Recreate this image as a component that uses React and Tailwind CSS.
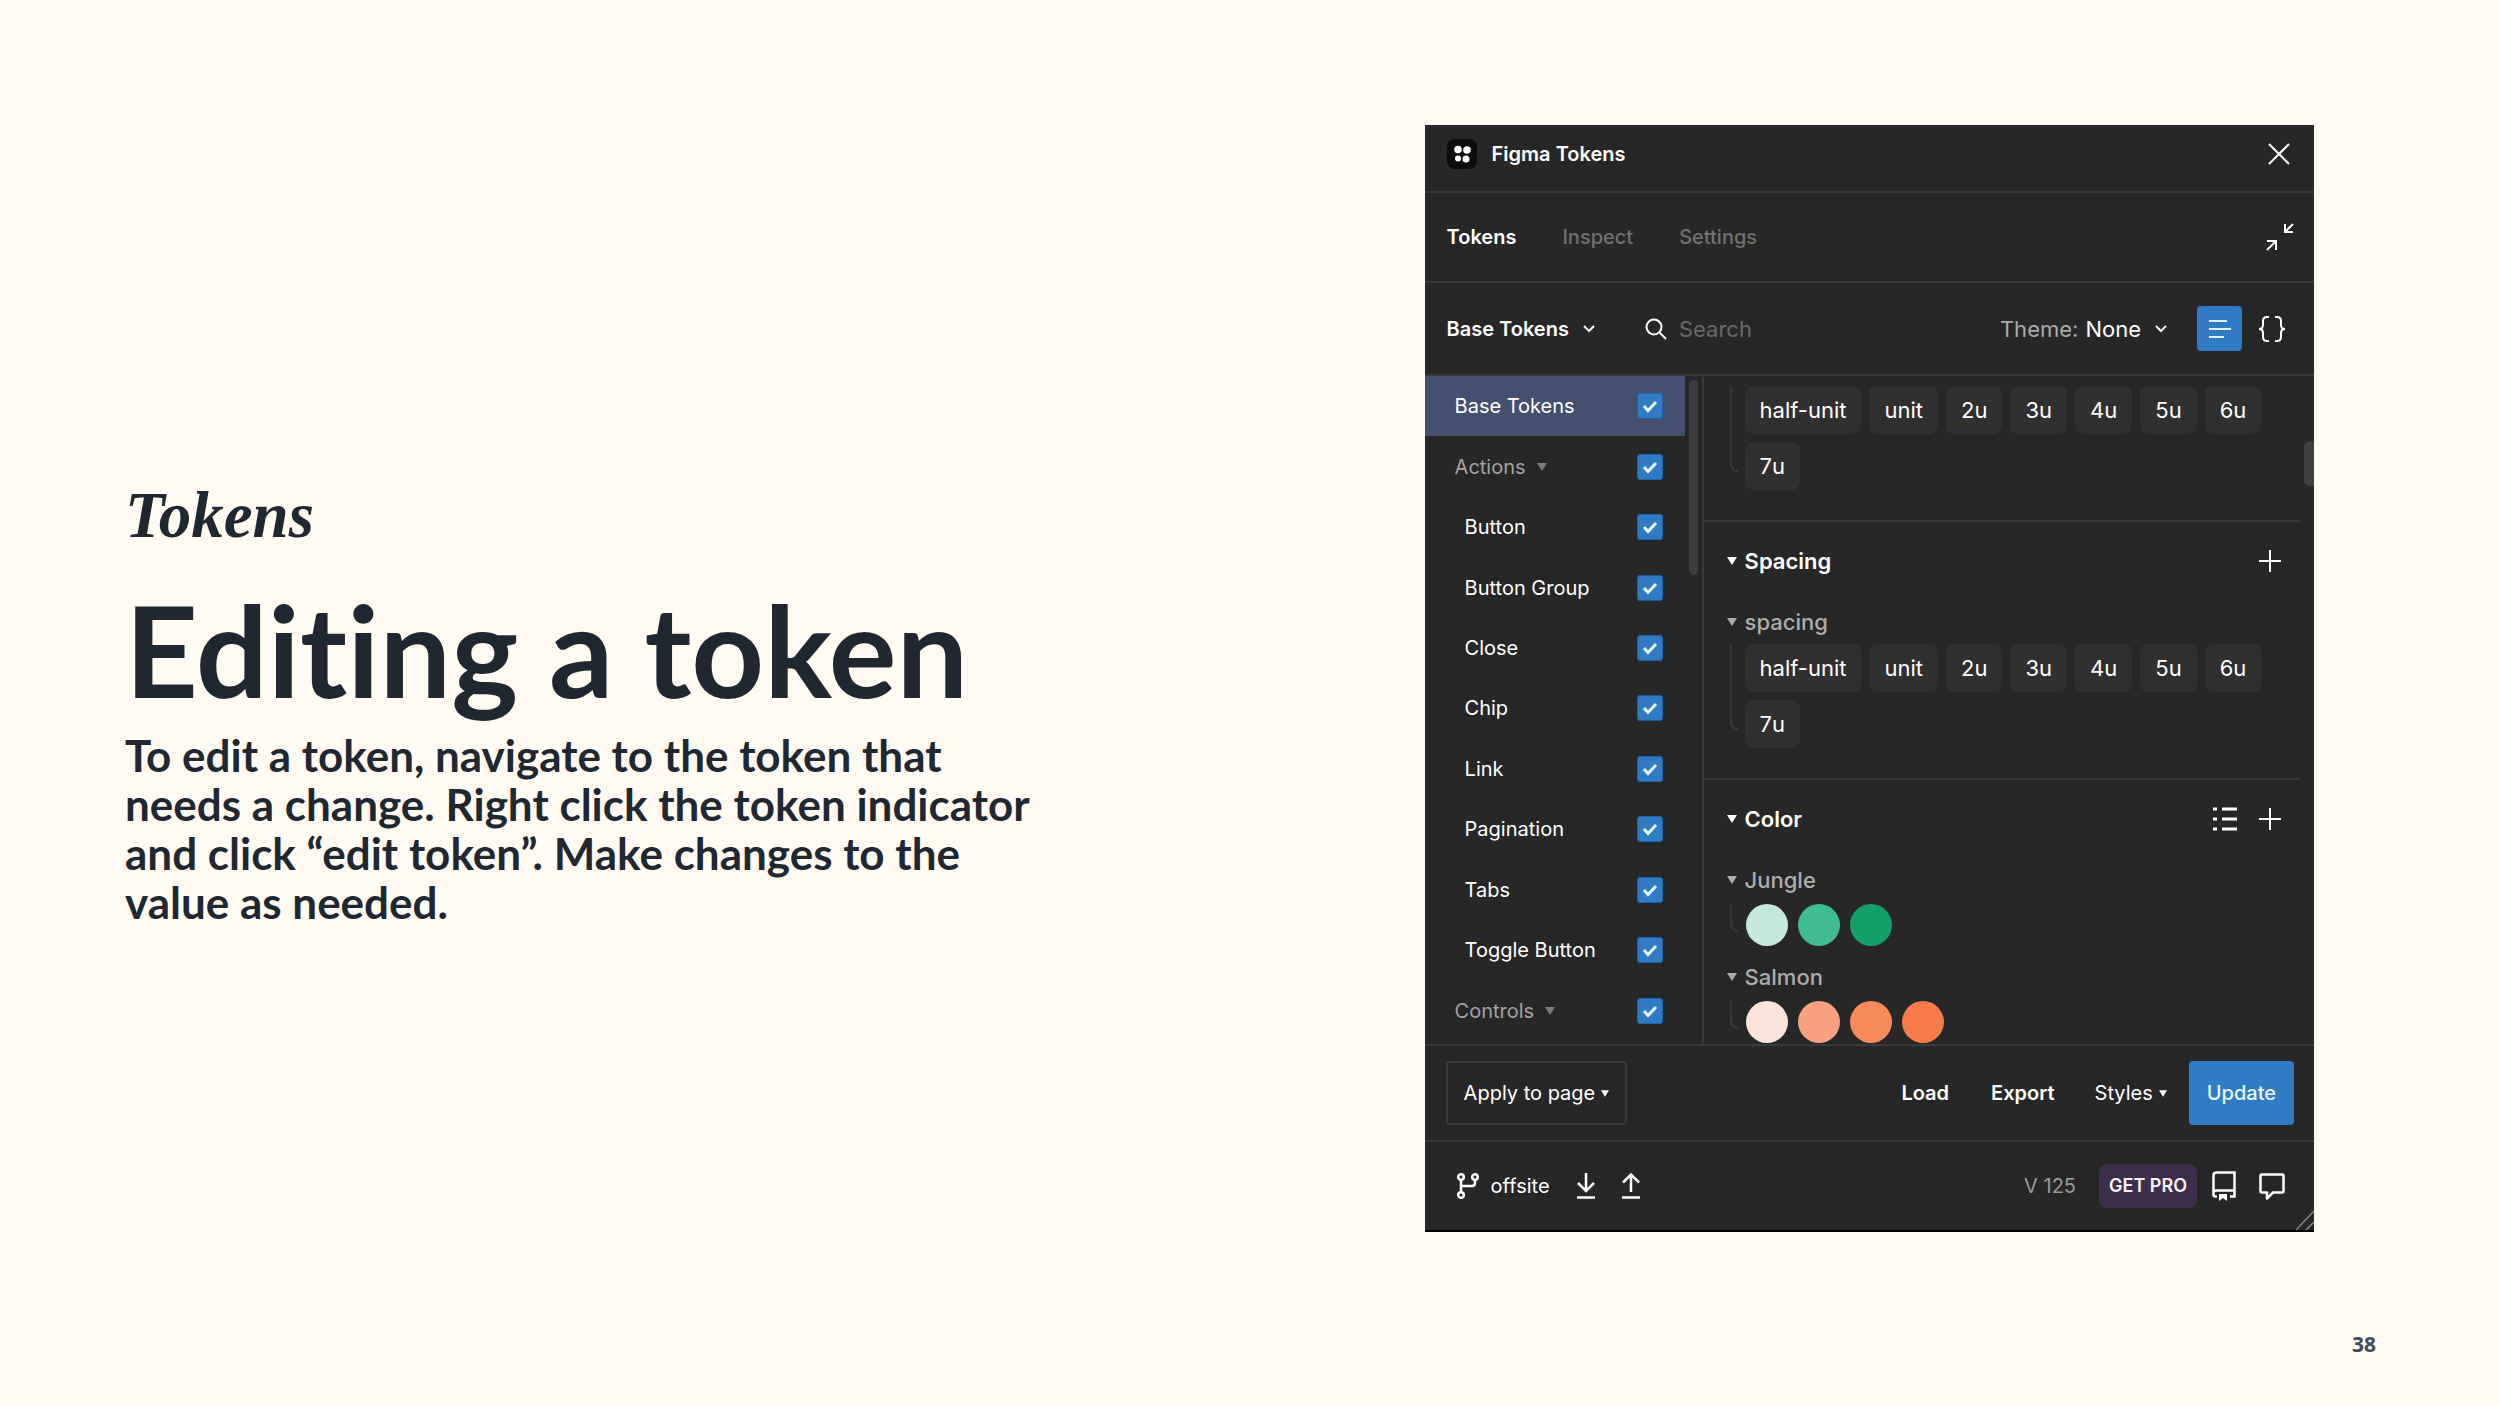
import { useState } from "react";

const spacingTokens = ["half-unit", "unit", "2u", "3u", "4u", "5u", "6u", "7u"];

const tokenSets = [
    { name: "Base Tokens", type: "active" },
    { name: "Actions", type: "folder" },
    { name: "Button", type: "child" },
    { name: "Button Group", type: "child" },
    { name: "Close", type: "child" },
    { name: "Chip", type: "child" },
    { name: "Link", type: "child" },
    { name: "Pagination", type: "child" },
    { name: "Tabs", type: "child" },
    { name: "Toggle Button", type: "child" },
    { name: "Controls", type: "folder" },
];

const jungle = ["#c5e8de", "#40bc93", "#159f68"];
const salmon = ["#fbe4da", "#f9a281", "#f68a5c", "#f67c4b"];

const Caret = ({ className = "" }) => (
    <svg viewBox="0 0 10 8" className={`shrink-0 ${className}`} fill="currentColor">
        <path d="M0 0h10L5 8z" />
    </svg>
);

const Chevron = () => (
    <svg viewBox="0 0 12 8" className="w-3 h-2" fill="none" stroke="currentColor" strokeWidth="2">
        <path d="M1 1l5 5 5-5" />
    </svg>
);

const Plus = () => (
    <svg viewBox="0 0 22 22" className="size-[22px]" stroke="currentColor" strokeWidth="2">
        <path d="M11 0v22M0 11h22" />
    </svg>
);

const TokenSet = ({ name, type }) => {
    const [checked, setChecked] = useState(true);

    return (
        <li className={`flex-1 flex items-center justify-between pr-[22px] ${type === "active" ? "bg-[#445070]" : ""} ${type === "child" ? "pl-10" : "pl-[30px]"}`}>
            <button className={`flex items-center gap-[11px] ${type === "folder" ? "text-[#a3a3a3]" : "text-white"}`}>
                {name}
                {type === "folder" && <Caret className="w-[10px] h-2 text-[#7d7d7d]" />}
            </button>
            <span className="grid size-[26px]">
                <input
                    type="checkbox"
                    aria-label={name}
                    checked={checked}
                    onChange={() => setChecked(!checked)}
                    className="appearance-none col-start-1 row-start-1 size-[26px] rounded-[3px] border border-[#1b64a8] bg-[#307bc4]"
                />
                {checked && (
                    <svg viewBox="0 0 26 26" className="col-start-1 row-start-1 pointer-events-none" fill="none" stroke="#e6fbff" strokeWidth="3">
                        <path d="M7 13l4 4.500 8-8.500" />
                    </svg>
                )}
            </span>
        </li>
    );
};

const Guide = () => <div className="w-2 mb-[18px] shrink-0 rounded-bl-lg border-l-2 border-b-2 border-[#383838]" />;

const Chips = () => (
    <div className="flex pl-[26px] pr-9 gap-[7px]">
        <Guide />
        <div className="flex flex-wrap gap-2">
            {spacingTokens.map((token) => (
                <button key={token} className="h-12 px-[15px] rounded-lg bg-[#303030] text-[22px] text-white">
                    {token}
                </button>
            ))}
        </div>
    </div>
);

const Swatches = ({ colors }) => (
    <div className="flex pt-0.5 pl-[26px] gap-2">
        <div className="w-2 h-7 shrink-0 rounded-bl-lg border-l-2 border-b-2 border-[#383838]" />
        <div className="flex gap-[10px]">
            {colors.map((color) => (
                <button key={color} aria-label={color} className="size-[42px] rounded-full" style={{ backgroundColor: color }} />
            ))}
        </div>
    </div>
);

const SectionTitle = ({ title, list }) => (
    <div className="flex items-center justify-between pl-[22px] pr-[19px] h-[78px]">
        <button className="flex items-center gap-[7px] text-[22px] font-semibold text-white">
            <Caret className="w-3 h-2" />
            {title}
        </button>
        <div className="flex items-center gap-[22px]">
            {list && (
                <button aria-label="List view">
                    <svg viewBox="0 0 24 24" className="size-6" stroke="currentColor" strokeWidth="3">
                        <path d="M0 2h4M9 2h15M0 12h4M9 12h15M0 22h4M9 22h15" />
                    </svg>
                </button>
            )}
            <button aria-label={`Add ${title}`}><Plus /></button>
        </div>
    </div>
);

const GroupTitle = ({ title }) => (
    <button className="flex items-center gap-[7px] h-11 pl-[22px] text-[22px] font-medium text-[#adadad]">
        <Caret className="w-3 h-2" />
        {title}
    </button>
);

const TokenPanel = () => (
    <section className="flex flex-col bg-[#272727] text-white font-['Inter',sans-serif] text-[20px] leading-7 border-b-2 border-black">
        {/* title bar */}
        <header className="flex items-center justify-between h-[68px] pl-[22px] pr-6 pb-2 border-b-2 border-[#393939]">
            <div className="flex items-center gap-[15px]">
                <svg viewBox="0 0 30 30" className="size-[30px]">
                    <rect width="30" height="30" rx="8" fill="#0c0c0c" />
                    <g fill="#fff">
                        <circle cx="11" cy="10.500" r="3.800" />
                        <circle cx="20" cy="11" r="3.800" />
                        <circle cx="11" cy="19.500" r="3" />
                        <circle cx="19" cy="20" r="3.500" />
                    </g>
                </svg>
                <h2 className="font-semibold">Figma Tokens</h2>
            </div>
            <button aria-label="Close">
                <svg viewBox="0 0 22 22" className="size-[22px]" stroke="currentColor" strokeWidth="2">
                    <path d="M1 1l20 20M21 1L1 21" />
                </svg>
            </button>
        </header>

        {/* tabs */}
        <nav className="flex items-center justify-between h-[90px] pl-[22px] pr-5 border-b-2 border-[#393939]">
            <div className="flex gap-[46px] font-medium text-[#717171]">
                <button className="font-semibold text-white">Tokens</button>
                <button>Inspect</button>
                <button>Settings</button>
            </div>
            <button aria-label="Minimize">
                <svg viewBox="0 0 28 28" className="size-7" fill="none" stroke="currentColor" strokeWidth="2">
                    <path d="M27 1l-8 8M19 1v8h8M1 27l8-8M1 18h9v9" />
                </svg>
            </button>
        </nav>

        {/* toolbar */}
        <div className="flex items-center h-[93px] pl-[22px] pr-7 border-b-2 border-[#393939]">
            <button className="flex items-center gap-[14px] font-semibold">
                Base Tokens
                <Chevron />
            </button>
            <label className="flex flex-1 items-center gap-3 ml-[50px]">
                <svg viewBox="0 0 22 22" className="size-[22px]" fill="none" stroke="currentColor" strokeWidth="2">
                    <circle cx="9" cy="9" r="7.500" />
                    <path d="M14.500 14.500l6.500 6.500" />
                </svg>
                <input type="text" placeholder="Search" aria-label="Search" className="w-40 text-[22px] bg-transparent outline-none placeholder:text-[#696969]" />
            </label>
            <button className="flex items-center gap-[7px] text-[22px]">
                <span className="text-[#ababab]">Theme:</span>
                None
                <span className="ml-[7px]"><Chevron /></span>
            </button>
            <button aria-label="List" className="flex items-center justify-center size-[45px] ml-[30px] rounded bg-[#307bc4]">
                <svg viewBox="0 0 24 18" className="w-6 h-[18px]" stroke="#d9f4ff" strokeWidth="2">
                    <path d="M1 1h18M1 9h22M1 17h15" />
                </svg>
            </button>
            <button aria-label="JSON" className="ml-4">
                <svg viewBox="0 0 28 26" className="w-7 h-[26px]" fill="none" stroke="currentColor" strokeWidth="2">
                    <path d="M11 1H9Q5 1 5 5v4q0 4-4 4 4 0 4 4v4q0 4 4 4h2M17 1h2q4 0 4 4v4q0 4 4 4-4 0-4 4v4q0 4-4 4h-2" />
                </svg>
            </button>
        </div>

        <div className="flex border-b-2 border-[#393939]">
            {/* token sets */}
            <aside className="flex w-[279px] border-r-2 border-[#393939]">
                <ul className="flex flex-1 flex-col pb-[3px]">
                    {tokenSets.map((set) => (
                        <TokenSet key={set.name} {...set} />
                    ))}
                </ul>
                <div className="w-[9px] h-[195px] ml-1 mr-1 mt-1 rounded-full bg-[#3d3d3d]" />
            </aside>

            {/* token list */}
            <div className="flex-1 flex">
                <div className="flex-1 flex flex-col pb-px">
                    <div className="pt-[10px] pb-[30px] border-b-2 border-[#393939]">
                        <Chips />
                    </div>
                    <div className="pb-[30px] border-b-2 border-[#393939]">
                        <SectionTitle title="Spacing" />
                        <GroupTitle title="spacing" />
                        <Chips />
                    </div>
                    <SectionTitle title="Color" list />
                    <div className="flex flex-col gap-[9px]">
                        <div>
                            <GroupTitle title="Jungle" />
                            <Swatches colors={jungle} />
                        </div>
                        <div>
                            <GroupTitle title="Salmon" />
                            <Swatches colors={salmon} />
                        </div>
                    </div>
                </div>
                <div className="w-[10px] h-[45px] mt-[65px] ml-1 rounded-l-md bg-[#404040]" />
            </div>
        </div>

        {/* actions */}
        <div className="flex items-center h-24 pl-[21px] pr-5 border-b-2 border-[#393939]">
            <button className="flex items-center gap-[6px] h-16 px-4 rounded-sm border-2 border-[#3a3a3a]">
                Apply to page
                <Caret className="w-2 h-[7px]" />
            </button>
            <div className="flex flex-1 items-center justify-end">
                <button className="font-semibold mr-[42px]">Load</button>
                <button className="font-semibold mr-10">Export</button>
                <button className="flex items-center gap-[6px] mr-[22px]">
                    Styles
                    <Caret className="w-2 h-[7px]" />
                </button>
                <button className="h-16 px-[18px] rounded bg-[#307bc4] font-medium text-[#e6fbff]">Update</button>
            </div>
        </div>

        {/* status bar */}
        <footer className="relative flex items-center h-[88px] pl-8 pr-[29px]">
            <button className="flex items-center gap-3">
                <svg viewBox="0 0 22 26" className="w-[22px] h-[26px]" fill="none" stroke="currentColor" strokeWidth="2.500">
                    <circle cx="4" cy="4" r="2.800" />
                    <circle cx="18" cy="4" r="2.800" />
                    <circle cx="4" cy="22" r="2.800" />
                    <path d="M4 7v12M18 7v3q0 3-3 3H4" />
                </svg>
                offsite
            </button>
            <button aria-label="Pull" className="ml-[26px]">
                <svg viewBox="0 0 20 26" className="w-5 h-[26px]" fill="none" stroke="currentColor" strokeWidth="2.500">
                    <path d="M10 0v18M2 10l8 8 8-8M1 24.500h18" />
                </svg>
            </button>
            <button aria-label="Push" className="ml-[25px]">
                <svg viewBox="0 0 20 26" className="w-5 h-[26px]" fill="none" stroke="currentColor" strokeWidth="2.500">
                    <path d="M10 19V2M2 9.500l8-8 8 8M1 24.500h18" />
                </svg>
            </button>
            <span className="flex-1 text-right mr-[23px] text-[#9a9a9a]">V 125</span>
            <a href="#pro" className="flex items-center h-11 px-[10px] rounded-lg bg-[#3d2f4c] text-[18px] font-semibold text-[#fbf2ff]">GET PRO</a>
            <button aria-label="Docs" className="ml-[15px]">
                <svg viewBox="0 0 24 30" className="w-6 h-[30px]" fill="none" stroke="currentColor" strokeWidth="2.500">
                    <path d="M5 25.500H3.500q-2 0-2-2V4.500q0-3 3-3h18v24H18M1.500 22q0-2.500 3-2.500h18" />
                    <path d="M7 23h8v7l-4-3-4 3z" fill="currentColor" stroke="none" />
                </svg>
            </button>
            <button aria-label="Feedback" className="ml-[23px]">
                <svg viewBox="0 0 26 27" className="w-[26px] h-[27px]" fill="none" stroke="currentColor" strokeWidth="2.500" strokeLinejoin="round">
                    <path d="M3 1.500h20q1.500 0 1.500 1.500v15q0 1.500-1.500 1.500H14L8 25.500v-6H3q-1.500 0-1.500-1.500V3Q1.500 1.500 3 1.500z" />
                </svg>
            </button>
            <svg viewBox="0 0 18 20" className="absolute right-0 bottom-0 w-[18px] h-5" stroke="#8a8a8a" strokeWidth="1.500">
                <path d="M0 20L18 1M10 20l8-8" />
            </svg>
        </footer>
    </section>
);

const App = () => {
    return (
        <div className="flex flex-col min-h-screen bg-[#fffbf3] text-[#1f2831]">
            <main className="grid grid-cols-[1299fr_889fr] pl-[125px] pr-[186px] pt-[125px]">
                <div className="self-center pt-12 pr-60 font-['Lato',sans-serif] font-bold [font-variant-ligatures:none]">
                    <p className="font-['Liberation_Serif',serif] italic text-[65px] leading-[72px]">Tokens</p>
                    <h1 className="mt-7 text-[127px] leading-[140px]">Editing a token</h1>
                    <p className="mt-3 text-[44px] leading-[49px]">
                        To edit a token, navigate to the token that<br />
                        needs a change. Right click the token indicator<br />
                        and click “edit token”. Make changes to the<br />
                        value as needed.
                    </p>
                </div>
                <TokenPanel />
            </main>
            <footer className="flex flex-1 items-end justify-end pr-[124px] pb-12">
                <span className="font-['Open_Sans',sans-serif] font-bold text-[21px] leading-7 text-[#414b55]">38</span>
            </footer>
        </div>
    );
};

export default App;
